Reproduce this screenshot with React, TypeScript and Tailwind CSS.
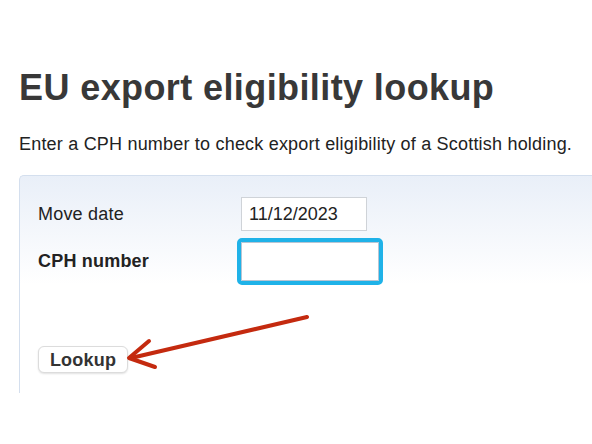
import type { ReactNode } from "react"

function FieldRow({ label, bold, children }: { label: string; bold?: boolean; children: ReactNode }) {
  return (
    <div className="grid grid-cols-[203px_1fr] items-center">
      <span className={`text-[18px] tracking-[0.2px] text-[#222] ${bold ? "font-bold" : ""}`}>{label}</span>
      <div>{children}</div>
    </div>
  )
}

export default function App() {
  return (
    <div className="relative h-[444px] w-[592px] overflow-hidden bg-white font-['Liberation_Sans',Arial,sans-serif]">
      <div className="pl-[19px]">
        <h1 className="mt-[66px] text-[36px] font-bold leading-[43px] tracking-[0.4px] text-[#383838]">
          EU export eligibility lookup
        </h1>
        <p className="mt-[22px] text-[18px] leading-[27px] tracking-[0.2px] text-[#222]">
          Enter a CPH number to check export eligibility of a Scottish holding.
        </p>

        {/* Form panel */}
        <div className="mt-[17px] h-[218px] w-[620px] rounded-tl-[5px] border-l border-t border-[#d4dfee] bg-gradient-to-b from-[#e9eff8] via-white to-white pl-[18px] pt-[21px]">
          <div className="flex flex-col gap-[11px]">
            <FieldRow label="Move date">
              <input
                readOnly
                defaultValue="11/12/2023"
                className="h-[34px] w-[126px] border border-[#cfd3d8] bg-white pl-[7px] text-[18px] text-[#222] outline-none"
              />
            </FieldRow>
            <FieldRow label="CPH number" bold>
              <input
                readOnly
                className="h-[39px] w-[138px] rounded-[1px] border border-[#b8c5d3] bg-white outline outline-[4px] outline-offset-0 outline-[#1fb2e8]"
              />
            </FieldRow>
          </div>

          <button className="mt-[65px] h-[27px] w-[90px] rounded-[6px] border border-[#dcdcdc] bg-white text-[18px] font-bold leading-none tracking-[0.2px] text-[#333] shadow-[0_1px_2px_rgba(0,0,0,0.12)]">
            Lookup
          </button>
        </div>
      </div>

      {/* Annotation arrow */}
      <svg className="pointer-events-none absolute left-0 top-0" width="592" height="444" aria-hidden>
        <g stroke="#c42a0f" strokeWidth="4" strokeLinecap="round" strokeLinejoin="round" fill="none">
          <path d="M307 317 L131 358" />
          <path d="M149 341 L129 358 L155 367" />
        </g>
      </svg>
    </div>
  )
}
